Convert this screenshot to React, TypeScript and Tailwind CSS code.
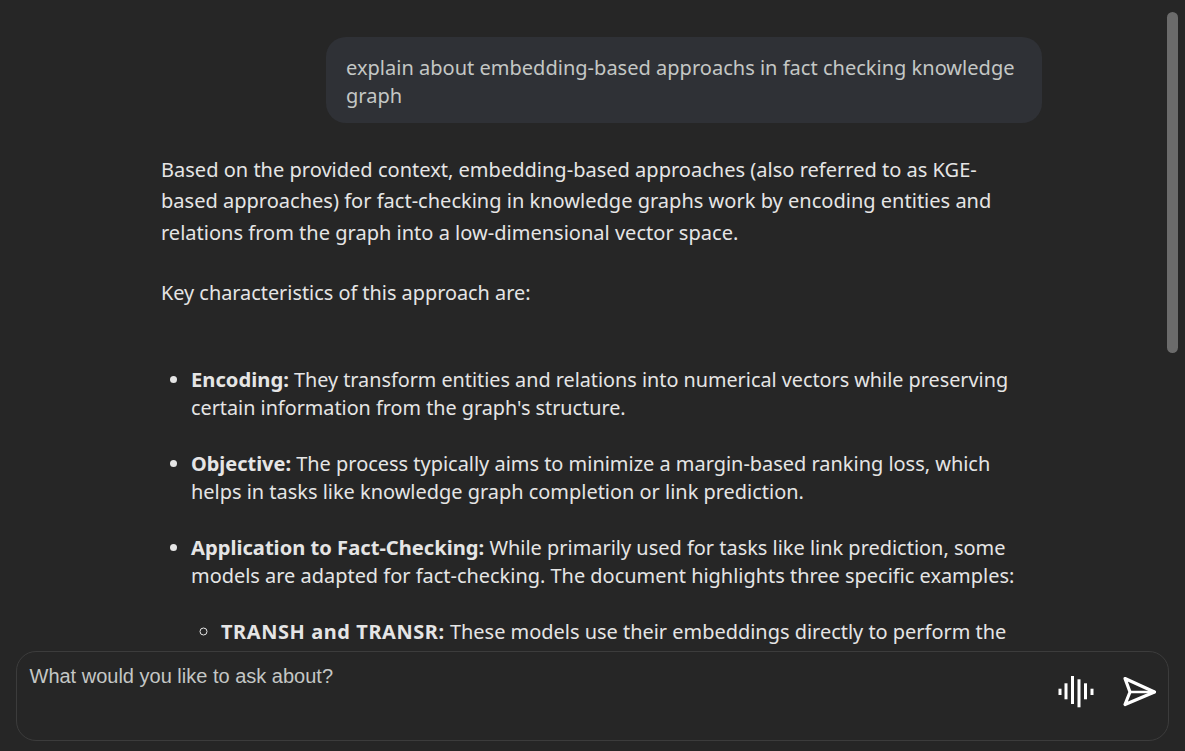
import React from "react";

function Wave() {
  const bars: [number, number, number][] = [
    [0.5, 14.7, 6.3],
    [6.5, 9.3, 16],
    [13, 2, 28],
    [19.5, 5.3, 28],
    [26, 9.3, 16],
    [32.5, 14.7, 6.3],
  ];
  return (
    <svg width="36" height="36" viewBox="0 0 36 36" fill="white">
      {bars.map(([x, y, h]) => (
        <rect key={x} x={x} y={y} width="3" height={h} />
      ))}
    </svg>
  );
}

function Send() {
  return (
    <svg width="37" height="36" viewBox="0 0 37 36" fill="none" stroke="white" strokeWidth="3.2" strokeLinejoin="round" strokeLinecap="round">
      <path d="M4 4.5 L33.5 18 L4 30.5 L9 18 Z" />
      <path d="M9 18 H33.5" strokeWidth="2.4" />
    </svg>
  );
}

export default function App() {
  return (
    <div className="relative h-[751px] w-[1185px] overflow-hidden bg-[#262626] text-[#e5e5e5] font-['Noto_Sans',sans-serif]">
      <div className="h-[751px] overflow-hidden">
        <div className="ml-[161px] w-[860px] pt-[37px]">
          <div className="-mr-[21px] flex justify-end">
            <div className="w-[716px] rounded-[20px] bg-[#2f3136] px-5 pt-[17px] pb-[13px] text-[20.05px] leading-[28px] text-[#c4c7c5]">
              explain about embedding-based approachs in fact checking knowledge graph
            </div>
          </div>
          <div className="mt-[30.6px] text-[20.05px]">
            <p className="leading-[31.5px]">Based on the provided context, embedding-based approaches (also referred to as KGE-based approaches) for fact-checking in knowledge graphs work by encoding entities and relations from the graph into a low-dimensional vector space.</p>
            <p className="mt-[29.4px] text-[19.85px] leading-[31.5px]">Key characteristics of this approach are:</p>
            <ul className="mt-[56px] list-disc pl-[30px] leading-[28px]">
              <li className="text-[19.8px]">
                <b className="text-[20.2px]">Encoding:</b> They transform entities and relations into numerical vectors while preserving certain information from the graph's structure.
              </li>
              <li className="mt-[28px] text-[19.95px]">
                <b>Objective:</b> The process typically aims to minimize a margin-based ranking loss, which helps in tasks like knowledge graph completion or link prediction.
              </li>
              <li className="mt-[27px] text-[19.95px]">
                <b className="text-[20.15px]">Application to Fact-Checking:</b> While primarily used for tasks like link prediction, some models are adapted for fact-checking. The document highlights three specific examples:
                <ul className="mt-[28px] list-[circle] pl-[30px]">
                  <li><b className="tracking-[0.6px]">TRANSH and TRANSR:</b> These models use their embeddings directly to perform the</li>
                </ul>
              </li>
            </ul>
          </div>
        </div>
      </div>
      <div className="absolute right-[7px] top-[12px] h-[341px] w-[11px] rounded-full bg-[#6b6b6b]" />
      <div className="absolute inset-x-0 bottom-0 h-[100px] bg-[#262626] px-4">
        <div className="flex h-[90px] items-start justify-between rounded-[20px] border border-[#3c3c3c] pl-[12.5px] pr-[10px]">
          <span className="mt-[11px] font-['Liberation_Sans',sans-serif] text-[20px] leading-[26px] text-[#c4c7c5]">What would you like to ask about?</span>
          <div className="mt-[22px] flex items-center gap-[27px]">
            <Wave />
            <Send />
          </div>
        </div>
      </div>
    </div>
  );
}
